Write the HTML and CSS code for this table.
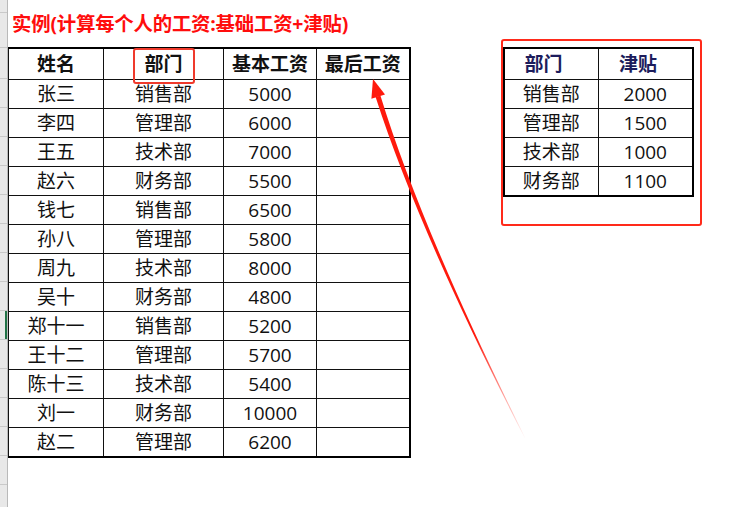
FILE: index.html
```html
<!DOCTYPE html>
<html lang="zh">
<head>
<meta charset="utf-8">
<link rel="stylesheet" href="styles.css">
</head>
<body>
<div class="sheet">
  <div class="gutter">
    <div class="g g-a"></div>
    <div class="g g-b"></div>
    <div class="g g-h"></div>
    <div class="g"></div><div class="g"></div><div class="g"></div><div class="g"></div>
    <div class="g"></div><div class="g"></div><div class="g"></div><div class="g"></div>
    <div class="g g-sel"></div><div class="g"></div><div class="g"></div><div class="g"></div>
    <div class="g"></div><div class="g"></div>
  </div>
  <div class="main">
    <div class="title">实例(计算每个人的工资:基础工资+津贴)</div>
    <div class="content">
      <table class="salary">
        <colgroup><col class="c1"><col class="c2"><col class="c3"><col class="c4"></colgroup>
        <thead>
          <tr><th>姓名</th><th>部门</th><th>基本工资</th><th>最后工资</th></tr>
        </thead>
        <tbody>
          <tr><td>张三</td><td>销售部</td><td>5000</td><td></td></tr>
          <tr><td>李四</td><td>管理部</td><td>6000</td><td></td></tr>
          <tr><td>王五</td><td>技术部</td><td>7000</td><td></td></tr>
          <tr><td>赵六</td><td>财务部</td><td>5500</td><td></td></tr>
          <tr><td>钱七</td><td>销售部</td><td>6500</td><td></td></tr>
          <tr><td>孙八</td><td>管理部</td><td>5800</td><td></td></tr>
          <tr><td>周九</td><td>技术部</td><td>8000</td><td></td></tr>
          <tr><td>吴十</td><td>财务部</td><td>4800</td><td></td></tr>
          <tr><td>郑十一</td><td>销售部</td><td>5200</td><td></td></tr>
          <tr><td>王十二</td><td>管理部</td><td>5700</td><td></td></tr>
          <tr><td>陈十三</td><td>技术部</td><td>5400</td><td></td></tr>
          <tr><td>刘一</td><td>财务部</td><td>10000</td><td></td></tr>
          <tr><td>赵二</td><td>管理部</td><td>6200</td><td></td></tr>
        </tbody>
      </table>
      <div class="allowance-box">
        <table class="allowance">
          <colgroup><col class="a1"><col class="a2"></colgroup>
          <thead>
            <tr><th>部门</th><th>津贴</th></tr>
          </thead>
          <tbody>
            <tr><td>销售部</td><td>2000</td></tr>
            <tr><td>管理部</td><td>1500</td></tr>
            <tr><td>技术部</td><td>1000</td></tr>
            <tr><td>财务部</td><td>1100</td></tr>
          </tbody>
        </table>
      </div>
    </div>
  </div>
  <div class="mark-dept"></div>
  <svg class="arrow" width="733" height="507" viewBox="0 0 733 507" aria-hidden="true">
    <defs>
      <linearGradient id="fade" gradientUnits="userSpaceOnUse" x1="0" y1="90" x2="0" y2="440">
        <stop offset="0" stop-color="#ff1a0d" stop-opacity="1"/>
        <stop offset="0.7" stop-color="#ff1a0d" stop-opacity="1"/>
        <stop offset="1" stop-color="#ff1a0d" stop-opacity="0"/>
      </linearGradient>
    </defs>
    <polygon points="373,79 385,94.6 371.4,98.8" fill="#ff1a0d"/>
    <path d="M380.4,95.4 Q421.5,229.5 525.3,437.9 L524.7,438.1 Q418.5,230.5 375.6,97 Z" fill="url(#fade)"/>
  </svg>
</div>
</body>
</html>
```
FILE: styles.css
```css
html, body {
  margin: 0;
  padding: 0;
  background: #ffffff;
}

.sheet {
  position: relative;
  width: 733px;
  height: 507px;
  display: flex;
  overflow: hidden;
  font-family: "Open Sans", "Noto Sans CJK SC", sans-serif;
  color: #111111;
}

.gutter {
  width: 8px;
  flex: none;
  display: flex;
  flex-direction: column;
  background: #e8e8e8;
  border-right: 1px solid #b9b9b9;
  box-sizing: border-box;
}

.g {
  height: 29px;
  flex: none;
  box-sizing: border-box;
  border-bottom: 1px solid #c9c9c9;
}

.g-a { height: 13px; }
.g-b { height: 35px; }
.g-h { height: 31px; }
.g-sel { box-shadow: inset -2px 0 0 #217346; }

.main {
  flex: 1;
  display: flex;
  flex-direction: column;
}

.title {
  height: 39px;
  box-sizing: border-box;
  padding: 11px 0 0 4px;
  font-family: "Open Sans", "Noto Sans CJK SC", sans-serif;
  font-weight: 700;
  font-size: 19.4px;
  line-height: 26px;
  color: #ff0d0d;
  letter-spacing: -0.2px;
}

.content {
  display: flex;
  align-items: flex-start;
}

table {
  border-collapse: collapse;
  table-layout: fixed;
  font-size: 19px;
}

.salary {
  margin-top: 8px;
  width: 401px;
  border-top: 2px solid #000;
  border-right: 2px solid #000;
  border-bottom: 2px solid #000;
  border-left: 1px solid #555;
}

.salary .c1 { width: 95px; }
.salary .c2 { width: 120px; }
.salary .c3 { width: 93px; }
.salary .c4 { width: 93px; }

th, td {
  padding: 0;
  text-align: center;
  border: 1px solid #111;
  height: 28px;
  line-height: 26px;
  white-space: nowrap;
  overflow: hidden;
}

.salary thead th {
  height: 30px;
  font-weight: 700;
  color: #111;
}

.allowance-box {
  margin-left: 90px;
  width: 201px;
  height: 187px;
  box-sizing: border-box;
  border: 2px solid #ff2a1a;
  border-radius: 3px;
  padding: 6px 0 0 0;
}

.allowance {
  width: 189px;
  border: 2px solid #000;
}

.allowance .a1 { width: 95px; }
.allowance .a2 { width: 94px; }

.allowance thead th {
  height: 30px;
  font-weight: 700;
  color: #1c1c5c;
  text-align: left;
  padding-left: 20px;
}

.mark-dept {
  position: absolute;
  left: 133px;
  top: 48px;
  width: 62px;
  height: 36px;
  box-sizing: border-box;
  border: 2px solid #ef3a2c;
  border-radius: 3px;
}

.arrow {
  position: absolute;
  left: 0;
  top: 0;
  pointer-events: none;
}
```
